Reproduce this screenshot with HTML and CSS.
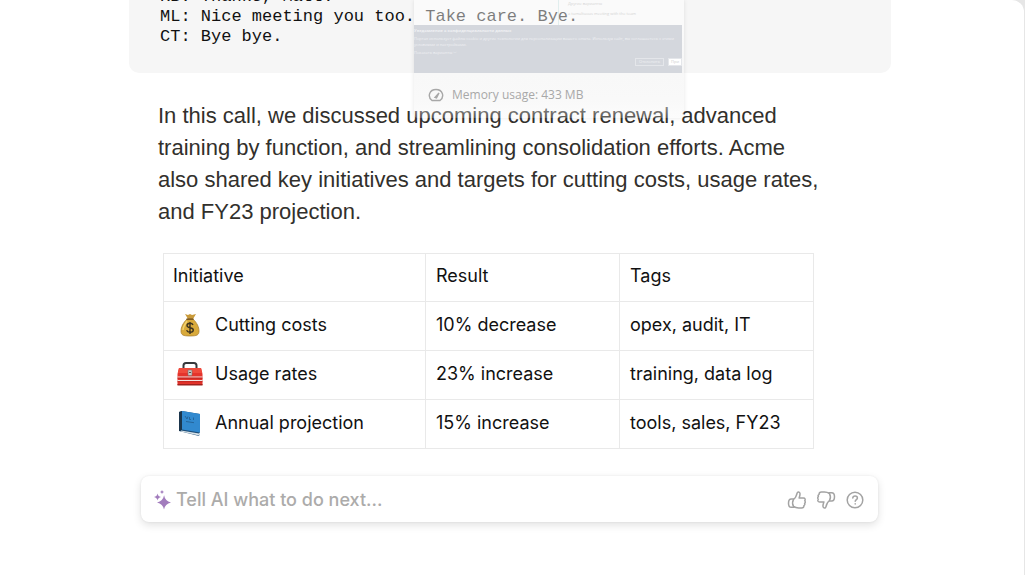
FILE: index.html
```html
<!DOCTYPE html>
<html lang="en">
<head>
    <meta charset="UTF-8">
    <meta name="viewport" content="width=device-width, initial-scale=1.0">
    <title>Meeting notes</title>
    <link rel="stylesheet" href="styles.css">
</head>
<body>
    <main class="page">
        <pre class="transcript">RB: Thanks, Matt.
ML: Nice meeting you too. Take care. Bye.
CT: Bye bye.</pre>

        <div class="content">
            <p class="summary">In this call, we discussed upcoming contract renewal, advanced training by function, and streamlining consolidation efforts. Acme also shared key initiatives and targets for cutting costs, usage rates, and FY23 projection.</p>

            <table class="initiatives">
                <thead>
                    <tr>
                        <th class="col-name">Initiative</th>
                        <th>Result</th>
                        <th>Tags</th>
                    </tr>
                </thead>
                <tbody>
                    <tr>
                        <td>
                            <div class="name">
                                <svg class="emoji" viewBox="0 0 26 26" aria-hidden="true">
                                    <path d="M8 2l3 1 2-1 2 1 4-1-3 5h-5z" fill="#c99a3a"/>
                                    <path d="M10 7h6c4 4 6 8 6 12 0 4-2 5-9 5s-9-1-9-5c0-4 2-8 6-12z" fill="#d9aa3b" stroke="#a67a26" stroke-width=".7"/>
                                    <path d="M10 9c-2 3-4 6-4 9" fill="none" stroke="#f1d16f" stroke-width="1.5"/>
                                    <path d="M9.500 7.200h7" stroke="#7d5a24" stroke-width="1.500"/>
                                    <path d="M16 13c-.5-1.300-1.500-1.700-3-1.700-1.800 0-3 .8-3 2.200 0 3.200 6.300 1.300 6.300 4.500 0 1.500-1.300 2.300-3.200 2.300-1.800 0-3-.7-3.500-2M13 10v12" fill="none" stroke="#3d331f" stroke-width="1.400"/>
                                </svg>
                                <span>Cutting costs</span>
                            </div>
                        </td>
                        <td>10% decrease</td>
                        <td>opex, audit, IT</td>
                    </tr>
                    <tr>
                        <td>
                            <div class="name">
                                <svg class="emoji" viewBox="0 0 26 26" aria-hidden="true">
                                    <path d="M6.500 8V4.500C6.500 2.500 7.500 2 9 2h8c1.500 0 2.500.5 2.500 2.500V8" fill="none" stroke="#35383c" stroke-width="2"/>
                                    <path d="M2 7h22l1.500 6v11H.5V13z" fill="#e5342c"/>
                                    <path d="M2 7h22l1.200 5H.8z" fill="#f04a3c"/>
                                    <path d="M.5 23h25v1.500H.5z" fill="#9f211d"/>
                                    <path d="M.5 16h25M.5 19.500h25" stroke="#f0e4e3" stroke-width="1.200"/>
                                    <path d="M.5 17.200h25M.5 20.700h25" stroke="#b8231f" stroke-width=".8"/>
                                    <rect x="11" y="9" width="4" height="5.500" rx=".7" fill="#c9c9c7" stroke="#77706d" stroke-width=".6"/>
                                    <path d="M12 11.500h2" stroke="#55504e"/>
                                </svg>
                                <span>Usage rates</span>
                            </div>
                        </td>
                        <td>23% increase</td>
                        <td>training, data log</td>
                    </tr>
                    <tr>
                        <td>
                            <div class="name">
                                <svg class="emoji" viewBox="0 0 26 26" aria-hidden="true">
                                    <path d="M2 2l3-1 18 3v19l-1 3L2 21z" fill="#1c4e79"/>
                                    <path d="M4 20.500l18 3 1-1.500v2l-1 1.500-18-4z" fill="#d9e2e7"/>
                                    <path d="M5 1l18 3v18.500L5 19.500z" fill="#3189cf"/>
                                    <path d="M2 2l3-1v18.500L3 21H2z" fill="#1b354c"/>
                                    <path d="M8 6l2 3 1-2.500M12.500 7v2.500h1.500M16.500 7.500V10M9 11.500l8 1.200" fill="none" stroke="#215c8e" stroke-width=".8"/>
                                </svg>
                                <span>Annual projection</span>
                            </div>
                        </td>
                        <td>15% increase</td>
                        <td>tools, sales, FY23</td>
                    </tr>
                </tbody>
            </table>
        </div>

        <form class="prompt">
            <svg class="sparkles" viewBox="0 0 18 20" aria-hidden="true">
                <path d="M10 5q1 6 7 7.500-6 1.500-7 7-1-5.500-7-7 6-1.500 7-7z"/>
                <path d="M3.500 3.500q.5 3 3.500 3.500-3 .5-3.500 3.500Q3 7.500 0 7q3-.5 3.500-3.500z"/>
                <path d="M8 0q.3 1.700 2 2-1.700.3-2 2-.3-1.700-2-2 1.700-.3 2-2z"/>
            </svg>
            <input class="prompt-input" type="text" aria-label="Tell AI what to do next" placeholder="Tell AI what to do next...">
            <button class="icon-button" type="button" aria-label="Good response">
                <svg viewBox="0 0 20 20">
                    <path d="M6.500 9.500c2.500-1.700 3-3.600 3.600-6.300.4-1.800 2.700-1.600 2.900.3.200 1.600-.4 3-.9 4.500h4.300c1.700 0 2.400 1.700 1.300 2.700.9.800.7 2-.1 2.600.5.900.2 1.900-.7 2.400.1 1.500-.8 2.300-2.300 2.300h-3c-2.200 0-3.600-.5-5.100-1.600-1.200-2.300-1.200-4.800 0-6.900z"/>
                    <path d="M6.500 9H4.300C2.500 9 1.500 11 1.500 13.200s1.200 4.100 2.800 4.100h2.900"/>
                </svg>
            </button>
            <button class="icon-button" type="button" aria-label="Bad response">
                <svg viewBox="0 0 20 20">
                    <path d="M13.500 10.500c-2.500 1.700-3 3.600-3.600 6.300-.4 1.800-2.700 1.600-2.900-.3-.2-1.600.4-3 .9-4.500H3.600c-1.700 0-2.400-1.700-1.300-2.700-.9-.8-.7-2 .1-2.600-.5-.9-.2-1.900.7-2.400C3 2.800 3.900 2 5.400 2h3c2.200 0 3.600.5 5.100 1.600 1.200 2.300 1.200 4.800 0 6.900z"/>
                    <path d="M13.500 11h2.200c1.800 0 2.800-2 2.800-4.200s-1.200-4.100-2.800-4.100h-2.900"/>
                </svg>
            </button>
            <button class="icon-button" type="button" aria-label="Help">
                <svg viewBox="0 0 20 20">
                    <circle cx="10" cy="10" r="7.800"/>
                    <path d="M7.800 8c.1-1.400 1-2.100 2.300-2.100 1.400 0 2.300.8 2.300 2 0 1.600-2.200 1.700-2.200 3.400M10.200 13.800v.3"/>
                </svg>
            </button>
        </form>

        <!-- faded tab preview over the transcript -->
        <aside class="tab-preview">
            <div class="shot">
                <div class="shot-page">
                    <span>Другие варианты</span>
                    <span>a tumultuous meeting with the team</span>
                </div>
                <div class="shot-banner">
                    <strong>Уведомление о конфиденциальности данных</strong>
                    <p>Портал использует файлы cookie и другие технологии для персонализации вашего опыта. Используя сайт, вы соглашаетесь с этими условиями и настройками.</p>
                    <div>Показать варианты ﹀</div>
                    <div class="shot-actions"><span>Отклонить</span><span class="accept">При</span></div>
                </div>
            </div>
            <div class="memory">
                <svg viewBox="0 0 16 16" aria-hidden="true">
                    <path d="M4 13.500C-1 9.500 1.500 2.500 8 2.500s9 7 4 11zM7 10.500l4-4.500-2.500 5z"/>
                </svg>
                <span>Memory usage: 433 MB</span>
            </div>
        </aside>
    </main>
</body>
</html>
```

FILE: styles.css
```css
* {
    box-sizing: border-box;
}

body {
    margin: 0;
    background-color: #e6e6e6;
    color: #111;
    font-family: Inter, 'Liberation Sans', sans-serif;
    overflow: hidden;
}

.page {
    position: relative;
    min-height: 100vh;
    margin-right: 1px;
    padding: 0 13% 0 129px;
    background-color: #fff;
    border-top-right-radius: 12px;
    overflow: hidden;
}

.transcript {
    height: 73px;
    margin: 0;
    padding: 0 31px 26px;
    display: flex;
    align-items: flex-end;
    background-color: #f6f6f6;
    border-radius: 0 0 10px 10px;
    font-family: 'Liberation Mono', monospace;
    font-size: 17px;
    line-height: 20px;
    overflow: hidden;
}

.content {
    padding: 27px 68px 0 29px;
}

.summary {
    margin: 0;
    color: #32302c;
    font-family: 'Liberation Sans', sans-serif;
    font-size: 22px;
    line-height: 32px;
}

.initiatives {
    width: 651px;
    max-width: 100%;
    margin: 25px 0 0 5px;
    border-collapse: collapse;
    table-layout: fixed;
    font-size: 18px;
    line-height: 24px;
}

.initiatives th,
.initiatives td {
    height: 49px;
    padding: 0 10px 2px;
    border: 1px solid #e9e9e9;
    font-weight: 400;
    text-align: left;
}

.initiatives th {
    height: 48px;
    padding-bottom: 4px;
}

.initiatives .col-name {
    width: 262px;
    padding-left: 9px;
}

.name {
    display: flex;
    align-items: center;
    gap: 12px;
    padding-left: 3px;
}

.emoji {
    width: 26px;
    height: 26px;
}

.prompt {
    display: flex;
    align-items: center;
    gap: 9px;
    height: 46px;
    margin: 27px 13px 0 12px;
    padding: 1px 13px 0;
    background-color: #fff;
    border-radius: 8px;
    box-shadow: 0 0 2px rgba(0, 0, 0, 0.08), 0 3px 9px rgba(0, 0, 0, 0.12);
}

.sparkles {
    width: 18px;
    height: 20px;
    fill: #a27cbd;
}

.prompt-input {
    flex: 1;
    min-width: 0;
    margin-left: -5px;
    padding: 0;
    border: none;
    outline: none;
    font-family: inherit;
    font-size: 18px;
    font-weight: 500;
}

.prompt-input::placeholder {
    color: #acabaa;
}

.icon-button {
    width: 20px;
    height: 20px;
    padding: 0;
    border: none;
    background: none;
    cursor: pointer;
}

.icon-button svg {
    display: block;
    fill: none;
    stroke: #a3a3a3;
    stroke-width: 1.5;
    stroke-linecap: round;
    stroke-linejoin: round;
}

.tab-preview {
    position: absolute;
    top: 0;
    left: 414px;
    width: 270px;
    height: 118px;
    background: linear-gradient(rgba(255, 255, 255, 0.45) 25px, rgba(245, 245, 245, 0.7) 74px, rgba(245, 245, 245, 0.6) 100px, rgba(240, 240, 240, 0.2));
    border-radius: 0 0 4px 4px;
    box-shadow: 0 0 4px rgba(0, 0, 0, 0.1);
    overflow: hidden;
}

.shot {
    margin-right: 2px;
    font-family: 'Open Sans', sans-serif;
    font-size: 4px;
    line-height: 6px;
}

.shot-page {
    display: flex;
    flex-direction: column;
    gap: 4px;
    height: 25px;
    margin-left: 144px;
    padding: 1px 0 0 9px;
    border-left: 1px solid rgba(200, 225, 225, 0.5);
    color: #d4d4d4;
}

.shot-banner {
    display: flex;
    flex-direction: column;
    gap: 2px;
    height: 48px;
    padding-top: 3px;
    background-color: #d4d7dd;
    color: #f0f1f4;
}

.shot-banner p {
    margin: 0;
}

.shot-actions {
    display: flex;
    justify-content: flex-end;
    gap: 4px;
}

.shot-actions span {
    padding: 0 3px;
    border: 1px solid #e4e6ea;
}

.shot-actions .accept {
    padding: 0 2px;
    background-color: #fff;
    color: #ccc;
}

.memory {
    display: flex;
    align-items: center;
    gap: 8px;
    padding: 13px 14px;
    color: #a8a8a8;
    font-family: 'Open Sans', sans-serif;
    font-size: 12px;
    line-height: 18px;
}

.memory svg {
    width: 16px;
    height: 16px;
    fill: none;
    stroke: #a8a8a8;
    stroke-width: 1.4;
}
```
